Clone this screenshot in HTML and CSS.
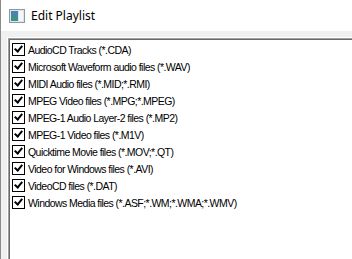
FILE: index.html
```html
<!DOCTYPE html>
<html lang="en">

<head>
  <meta charset="UTF-8">
  <title>Edit Playlist</title>
  <link rel="stylesheet" href="styles.css">
</head>

<body>
  <div class="window">
    <div class="titlebar">
      <svg class="app-icon" width="16" height="14" viewBox="0 0 16 14">
        <rect x="0.5" y="0.5" width="15" height="13" fill="#dfe6e8" stroke="#8a9aa0" />
        <rect x="2" y="2" width="7" height="10" fill="#3f8f8a" />
        <rect x="2" y="2" width="7" height="4" fill="#4f7fb8" />
        <rect x="10" y="2" width="4" height="10" fill="#f4f7f7" />
      </svg>
      <span class="title">Edit Playlist</span>
    </div>
    <div class="content">
      <div class="listbox">
        <ul class="items">
          <li><span class="check"></span>AudioCD Tracks (*.CDA)</li>
          <li><span class="check"></span>Microsoft Waveform audio files (*.WAV)</li>
          <li><span class="check"></span>MIDI Audio files (*.MID;*.RMI)</li>
          <li><span class="check"></span>MPEG Video files (*.MPG;*.MPEG)</li>
          <li><span class="check"></span>MPEG-1 Audio Layer-2 files (*.MP2)</li>
          <li><span class="check"></span>MPEG-1 Video files (*.M1V)</li>
          <li><span class="check"></span>Quicktime Movie files (*.MOV;*.QT)</li>
          <li><span class="check"></span>Video for Windows files (*.AVI)</li>
          <li><span class="check"></span>VideoCD files (*.DAT)</li>
          <li><span class="check"></span>Windows Media files (*.ASF;*.WM;*.WMA;*.WMV)</li>
        </ul>
      </div>
    </div>
  </div>
</body>

</html>
```

FILE: styles.css
```css
body {
  margin: 0;
  width: 352px;
  height: 259px;
  overflow: hidden;
  background-color: #f0f0f0;
  font-family: 'Liberation Sans', Arial, sans-serif;
}

.window {
  border-left: 1px solid #8c8c8c;
  height: 259px;
}

.titlebar {
  background-color: white;
  height: 31px;
  display: flex;
  align-items: center;
  padding-left: 8px;
  gap: 6px;
}

.app-icon {
  display: block;
}

.title {
  font-family: 'Noto Sans', 'Segoe UI', sans-serif;
  font-size: 12px;
  color: black;
  margin-top: -1px;
}

.content {
  padding: 6px 0 0 6px;
}

.listbox {
  border-top: 1px solid white;
  border-left: 1px solid white;
  height: 221px;
}

.items {
  list-style: none;
  margin: 0;
  padding: 2px 0 0 3px;
  height: 218px;
  background-color: white;
  border-top: 1px solid #a0a0a0;
  border-left: 1px solid #a0a0a0;
  box-shadow: inset 1px 1px 0 #696969;
}

.items li {
  height: 17px;
  display: flex;
  align-items: center;
  font-size: 10.5px;
  letter-spacing: -0.55px;
  color: black;
  white-space: nowrap;
}

.check {
  width: 11px;
  height: 11px;
  border: 1px solid black;
  margin-right: 3px;
  position: relative;
  background-color: white;
  flex: none;
}

.check::after {
  content: '';
  position: absolute;
  left: 3px;
  top: 0px;
  width: 3px;
  height: 6px;
  border-right: 2px solid black;
  border-bottom: 2px solid black;
  transform: rotate(40deg);
}
```
